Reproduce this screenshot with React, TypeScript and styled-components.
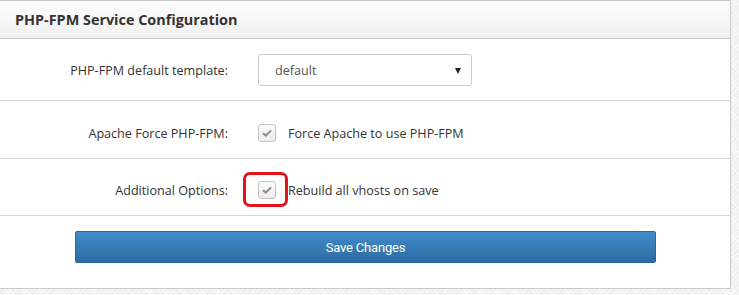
import styled, { createGlobalStyle } from 'styled-components';

const GlobalStyle = createGlobalStyle`
  html, body {
    margin: 0;
    padding: 0;
  }
  body {
    background-color: #f2f2f2;
    background-image:
      repeating-linear-gradient(45deg, rgba(255,255,255,0.6) 0 1px, transparent 1px 3px),
      repeating-linear-gradient(-45deg, rgba(0,0,0,0.025) 0 1px, transparent 1px 4px);
    font-family: "Open Sans", "Liberation Sans", sans-serif;
    color: #333;
  }
`;

const Panel = styled.div`
  width: 732px;
  margin-left: -1px;
  background: #fff;
  border: 1px solid #c8c8c8;
  box-sizing: border-box;
`;

const PanelHeader = styled.div`
  height: 37px;
  padding: 0 15px;
  display: flex;
  align-items: center;
  background: linear-gradient(#fdfdfd, #f1f1f1);
  border-bottom: 1px solid #c8c8c8;
  font-weight: 700;
  font-size: 14.4px;
  color: #333;
`;

const Row = styled.div<{ $pad: string }>`
  display: grid;
  grid-template-columns: 228px 1fr;
  column-gap: 30px;
  align-items: center;
  padding: ${(p) => p.$pad};
  border-bottom: 1px solid #d6d6d6;
`;

const Label = styled.div`
  text-align: right;
  font-size: 12.6px;
  color: #333;
`;

const SelectBox = styled.div`
  position: relative;
  width: 214px;
  height: 32px;
  box-sizing: border-box;
  border: 1px solid #ccc;
  border-radius: 3px;
  display: flex;
  align-items: center;
  padding-left: 16px;
  font-size: 12.6px;
  color: #555;
  background: #fff;
`;

const Caret = styled.span`
  position: absolute;
  right: 10px;
  top: 13px;
  width: 0;
  height: 0;
  border-left: 3px solid transparent;
  border-right: 3px solid transparent;
  border-top: 6px solid #222;
`;

const CheckLine = styled.label`
  position: relative;
  display: flex;
  align-items: center;
  gap: 12px;
  font-size: 12.6px;
  color: #333;
`;

const CheckBox = styled.span`
  width: 18px;
  height: 18px;
  box-sizing: border-box;
  border: 1px solid #c4c4c4;
  border-radius: 3px;
  background: linear-gradient(#fbfbfb, #ececec);
  display: flex;
  align-items: center;
  justify-content: center;
`;

const Highlight = styled.span`
  position: absolute;
  left: -15px;
  top: -9px;
  width: 45px;
  height: 35px;
  box-sizing: border-box;
  border: 3px solid #e3131b;
  border-radius: 7px;
`;

const Footer = styled.div`
  padding: 15px 0 25px 75px;
`;

const SaveButton = styled.button`
  width: 581px;
  height: 32px;
  border: 1px solid #2b669a;
  border-radius: 2px;
  background: linear-gradient(#428bca, #2d6ca2);
  color: #fff;
  font-family: Roboto, "Liberation Sans", sans-serif;
  font-size: 13px;
  letter-spacing: -0.2px;
  cursor: pointer;
`;

const Check = () => (
  <svg width="10" height="8" viewBox="0 0 10 8">
    <path d="M1 4.2 L3.8 6.6 L9 1.4" fill="none" stroke="#8a8a8a" strokeWidth="2" />
  </svg>
);

export default function App() {
  return (
    <>
      <GlobalStyle />
      <Panel>
        <PanelHeader>PHP-FPM Service Configuration</PanelHeader>
        <Row $pad="15px 0 14px">
          <Label>PHP-FPM default template:</Label>
          <SelectBox>
            default
            <Caret />
          </SelectBox>
        </Row>
        <Row $pad="23px 0 16px">
          <Label>Apache Force PHP-FPM:</Label>
          <CheckLine>
            <CheckBox><Check /></CheckBox>
            Force Apache to use PHP-FPM
          </CheckLine>
        </Row>
        <Row $pad="22px 0 16px">
          <Label>Additional Options:</Label>
          <CheckLine>
            <Highlight />
            <CheckBox><Check /></CheckBox>
            Rebuild all vhosts on save
          </CheckLine>
        </Row>
        <Footer>
          <SaveButton>Save Changes</SaveButton>
        </Footer>
      </Panel>
    </>
  );
}
